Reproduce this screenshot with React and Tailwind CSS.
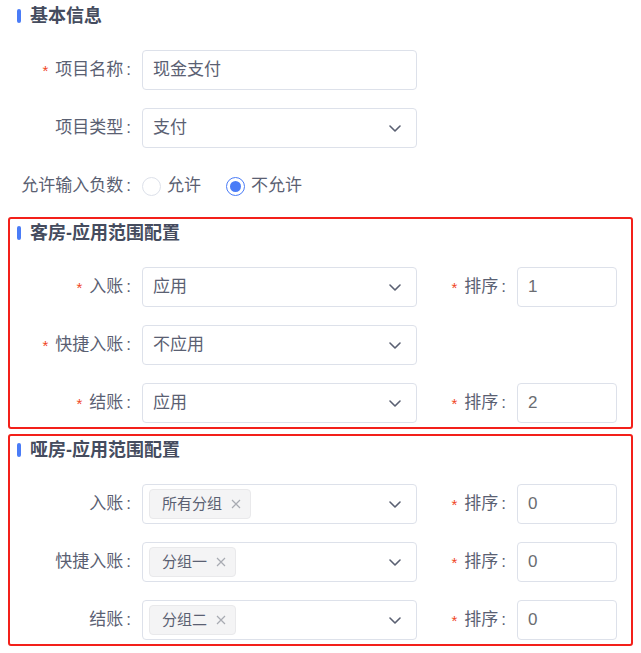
import React from 'react';

const FONT = "font-['Liberation_Sans','Noto_Sans_CJK_SC',sans-serif]";

function Req() {
  return <span className="mr-[7px] text-[15px] leading-none text-[#f0451f]">*</span>;
}

function Label({ text, required, width = 'w-[132px]' }) {
  return (
    <div className={`${width} shrink-0 pr-[11px] flex items-center justify-end text-[17px] text-[#5a6072]`}>
      {required && <Req />}
      {text}
      <span className="pl-[3px]">:</span>
    </div>
  );
}

function Chevron() {
  return (
    <svg width="12" height="7" viewBox="0 0 12 7" className="ml-auto shrink-0">
      <path d="M1 1l5 5 5-5" fill="none" stroke="#5a6072" strokeWidth="1.6" strokeLinecap="round" strokeLinejoin="round" />
    </svg>
  );
}

function Select({ value, tag }) {
  return (
    <div className={`w-[275px] h-[40px] shrink-0 border border-[#dde1ea] rounded-[4px] flex items-center pr-[15px] ${tag ? 'pl-[6px]' : 'pl-[10px]'}`}>
      {tag ? (
        <span className="h-[30px] inline-flex items-center pl-[12px] pr-[9px] bg-[#f4f4f5] border border-[#e9e9eb] rounded-[4px] text-[15px] text-[#5a6072]">
          {tag}
          <svg width="10" height="10" viewBox="0 0 10 10" className="ml-[9px]">
            <path d="M1 1l8 8M9 1l-8 8" stroke="#a8abb2" strokeWidth="1.2" />
          </svg>
        </span>
      ) : (
        <span className="text-[17px] text-[#5a6072]">{value}</span>
      )}
      <Chevron />
    </div>
  );
}

function Input({ value, width = 'w-[275px]', num }) {
  return (
    <div className={`${width} h-[40px] shrink-0 border border-[#dde1ea] rounded-[4px] flex items-center pl-[10px] text-[17px] ${num ? 'text-[#6b6d72]' : 'text-[#5a6072]'}`}>
      {value}
    </div>
  );
}

function Sort({ value }) {
  return (
    <>
      <Label text="排序" required width="w-[100px]" />
      <Input value={value} width="w-[100px]" num />
    </>
  );
}

function Title({ children }) {
  return (
    <div className="h-[20px] pl-[7px] flex items-center gap-[9px]">
      <span className="w-[4px] h-[14px] rounded-full bg-[#4a7cf7]" />
      <span className="text-[18px] font-bold text-[#454c5e]">{children}</span>
    </div>
  );
}

function Radio({ checked, label }) {
  return (
    <label className="flex items-center gap-[6px] text-[17px] text-[#5a6072]">
      {checked ? (
        <span className="w-[19px] h-[19px] rounded-full border-[1.5px] border-[#4a7cf7] flex items-center justify-center">
          <span className="w-[11px] h-[11px] rounded-full bg-[#4a7cf7]" />
        </span>
      ) : (
        <span className="w-[19px] h-[19px] rounded-full border border-[#dde1ea]" />
      )}
      {label}
    </label>
  );
}

function Section({ outlined, title, children }) {
  return (
    <section className={`mx-[8px] border-2 rounded-[3px] pt-[4px] pb-[4px] ${outlined ? 'border-[#f3201a]' : 'border-transparent'}`}>
      <Title>{title}</Title>
      <div className="mt-[24px] flex flex-col gap-[18px]">{children}</div>
    </section>
  );
}

function Row({ children }) {
  return <div className="h-[40px] flex items-center">{children}</div>;
}

export default function App() {
  return (
    <div className={`w-[641px] min-h-[653px] bg-white flex flex-col gap-[5px] ${FONT}`}>
      <Section title="基本信息">
        <Row>
          <Label text="项目名称" required />
          <Input value="现金支付" />
        </Row>
        <Row>
          <Label text="项目类型" />
          <Select value="支付" />
        </Row>
        <Row>
          <Label text="允许输入负数" />
          <div className="flex items-center gap-[25px]">
            <Radio label="允许" />
            <Radio checked label="不允许" />
          </div>
        </Row>
      </Section>

      <Section outlined title="客房-应用范围配置">
        <Row>
          <Label text="入账" required />
          <Select value="应用" />
          <Sort value="1" />
        </Row>
        <Row>
          <Label text="快捷入账" required />
          <Select value="不应用" />
        </Row>
        <Row>
          <Label text="结账" required />
          <Select value="应用" />
          <Sort value="2" />
        </Row>
      </Section>

      <Section outlined title="哑房-应用范围配置">
        <Row>
          <Label text="入账" />
          <Select tag="所有分组" />
          <Sort value="0" />
        </Row>
        <Row>
          <Label text="快捷入账" />
          <Select tag="分组一" />
          <Sort value="0" />
        </Row>
        <Row>
          <Label text="结账" />
          <Select tag="分组二" />
          <Sort value="0" />
        </Row>
      </Section>
    </div>
  );
}
